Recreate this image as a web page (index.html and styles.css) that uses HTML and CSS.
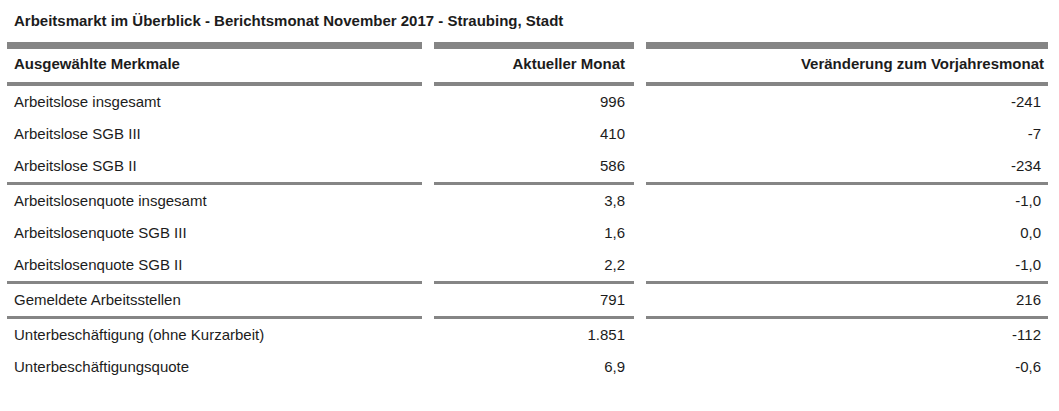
FILE: index.html
```html
<!DOCTYPE html>
<html lang="de">
<head>
<meta charset="utf-8">
<title>Arbeitsmarkt im Überblick</title>
<link rel="stylesheet" href="styles.css">
</head>
<body>
<div class="title">Arbeitsmarkt im Überblick - Berichtsmonat November 2017 - Straubing, Stadt</div>
<table class="data">
  <colgroup>
    <col class="c1">
    <col class="c2">
    <col class="c3">
  </colgroup>
  <thead>
    <tr>
      <th class="lbl">Ausgewählte Merkmale</th>
      <th class="num n2">Aktueller Monat</th>
      <th class="num n3">Veränderung zum Vorjahresmonat</th>
    </tr>
  </thead>
  <tbody>
    <tr><td class="lbl">Arbeitslose insgesamt</td><td class="num n2">996</td><td class="num n3">-241</td></tr>
    <tr><td class="lbl">Arbeitslose SGB III</td><td class="num n2">410</td><td class="num n3">-7</td></tr>
    <tr><td class="lbl">Arbeitslose SGB II</td><td class="num n2">586</td><td class="num n3">-234</td></tr>
    <tr class="sep"><td class="lbl">Arbeitslosenquote insgesamt</td><td class="num n2">3,8</td><td class="num n3">-1,0</td></tr>
    <tr><td class="lbl">Arbeitslosenquote SGB III</td><td class="num n2">1,6</td><td class="num n3">0,0</td></tr>
    <tr><td class="lbl">Arbeitslosenquote SGB II</td><td class="num n2">2,2</td><td class="num n3">-1,0</td></tr>
    <tr class="sep"><td class="lbl">Gemeldete Arbeitsstellen</td><td class="num n2">791</td><td class="num n3">216</td></tr>
    <tr class="sep"><td class="lbl">Unterbeschäftigung (ohne Kurzarbeit)</td><td class="num n2">1.851</td><td class="num n3">-112</td></tr>
    <tr><td class="lbl">Unterbeschäftigungsquote</td><td class="num n2">6,9</td><td class="num n3">-0,6</td></tr>
  </tbody>
</table>
</body>
</html>
```

FILE: styles.css
```css
html, body {
  margin: 0;
  padding: 0;
  background: #ffffff;
}

body {
  font-family: "Liberation Sans", Arial, sans-serif;
  color: #1c1c1c;
  width: 1059px;
  height: 411px;
  overflow: hidden;
}

.title {
  font-weight: bold;
  font-size: 15px;
  line-height: 18px;
  padding: 12px 0 0 14px;
  margin: 0 0 12px 0;
}

.data {
  table-layout: fixed;
  border-collapse: separate;
  border-spacing: 12px 0;
  width: 1065px;
  margin-left: -5px;
  font-size: 15px;
  line-height: 18px;
}

.c1 { width: 415px; }
.c2 { width: 200px; }
.c3 { width: 402px; }

.data th,
.data td {
  padding: 7px 7px 7px 7px;
  white-space: nowrap;
}

.data th {
  font-weight: bold;
  border-top: 7px solid #858585;
  border-bottom: 4px solid #858585;
  padding-top: 6px;
  padding-bottom: 9px;
}

.lbl { text-align: left; }
.num { text-align: right; }
.n2 { padding-right: 9px !important; }
.data td.n3 { padding-right: 7px; }
.data th.n3 { padding-right: 4px; }

.data tr.sep td {
  border-top: 3px solid #858585;
}
```
